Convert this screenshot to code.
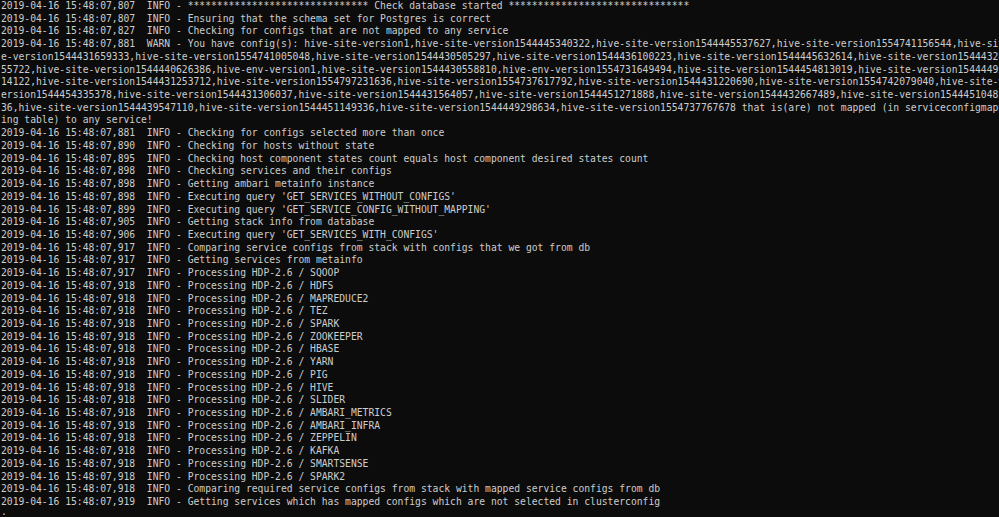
import React from "react";

const P = "2019-04-16 15:48:07,";
const stars = "*".repeat(31);

const lines: string[] = [
  `${P}807  INFO - ${stars} Check database started ${stars}`,
  `${P}807  INFO - Ensuring that the schema set for Postgres is correct`,
  `${P}827  INFO - Checking for configs that are not mapped to any service`,
  `${P}881  WARN - You have config(s): hive-site-version1,hive-site-version1544445340322,hive-site-version1544445537627,hive-site-version1554741156544,hive-sit`,
  `e-version1544431659333,hive-site-version1554741005048,hive-site-version1544430505297,hive-site-version1544436100223,hive-site-version1544445632614,hive-site-version15444328`,
  `55722,hive-site-version1544440626386,hive-env-version1,hive-site-version1544430558810,hive-env-version1554731649494,hive-site-version1544454813019,hive-site-version15444495`,
  `14122,hive-site-version1544431253712,hive-site-version1554797231636,hive-site-version1554737617792,hive-site-version1544431220690,hive-site-version1554742079040,hive-site-v`,
  `ersion1544454335378,hive-site-version1544431306037,hive-site-version1544431564057,hive-site-version1544451271888,hive-site-version1544432667489,hive-site-version15444510481`,
  `36,hive-site-version1544439547110,hive-site-version1544451149336,hive-site-version1544449298634,hive-site-version1554737767678 that is(are) not mapped (in serviceconfigmapp`,
  `ing table) to any service!`,
  `${P}881  INFO - Checking for configs selected more than once`,
  `${P}890  INFO - Checking for hosts without state`,
  `${P}895  INFO - Checking host component states count equals host component desired states count`,
  `${P}898  INFO - Checking services and their configs`,
  `${P}898  INFO - Getting ambari metainfo instance`,
  `${P}898  INFO - Executing query 'GET_SERVICES_WITHOUT_CONFIGS'`,
  `${P}899  INFO - Executing query 'GET_SERVICE_CONFIG_WITHOUT_MAPPING'`,
  `${P}905  INFO - Getting stack info from database`,
  `${P}906  INFO - Executing query 'GET_SERVICES_WITH_CONFIGS'`,
  `${P}917  INFO - Comparing service configs from stack with configs that we got from db`,
  `${P}917  INFO - Getting services from metainfo`,
  `${P}917  INFO - Processing HDP-2.6 / SQOOP`,
  `${P}918  INFO - Processing HDP-2.6 / HDFS`,
  `${P}918  INFO - Processing HDP-2.6 / MAPREDUCE2`,
  `${P}918  INFO - Processing HDP-2.6 / TEZ`,
  `${P}918  INFO - Processing HDP-2.6 / SPARK`,
  `${P}918  INFO - Processing HDP-2.6 / ZOOKEEPER`,
  `${P}918  INFO - Processing HDP-2.6 / HBASE`,
  `${P}918  INFO - Processing HDP-2.6 / YARN`,
  `${P}918  INFO - Processing HDP-2.6 / PIG`,
  `${P}918  INFO - Processing HDP-2.6 / HIVE`,
  `${P}918  INFO - Processing HDP-2.6 / SLIDER`,
  `${P}918  INFO - Processing HDP-2.6 / AMBARI_METRICS`,
  `${P}918  INFO - Processing HDP-2.6 / AMBARI_INFRA`,
  `${P}918  INFO - Processing HDP-2.6 / ZEPPELIN`,
  `${P}918  INFO - Processing HDP-2.6 / KAFKA`,
  `${P}918  INFO - Processing HDP-2.6 / SMARTSENSE`,
  `${P}918  INFO - Processing HDP-2.6 / SPARK2`,
  `${P}918  INFO - Comparing required service configs from stack with mapped service configs from db`,
  `${P}919  INFO - Getting services which has mapped configs which are not selected in clusterconfig`,
  `·`,
];

export default function App() {
  return (
    <div className="w-[999px] h-[517px] overflow-hidden bg-[#0c0c0c] pl-[1px] text-[#cccccc] text-[9.7px] leading-[12.72px] font-['DejaVu_Sans_Mono',monospace]">
      {lines.map((l, i) => (
        <div key={i} className="whitespace-pre overflow-hidden h-[12.72px]">
          {l}
        </div>
      ))}
    </div>
  );
}
